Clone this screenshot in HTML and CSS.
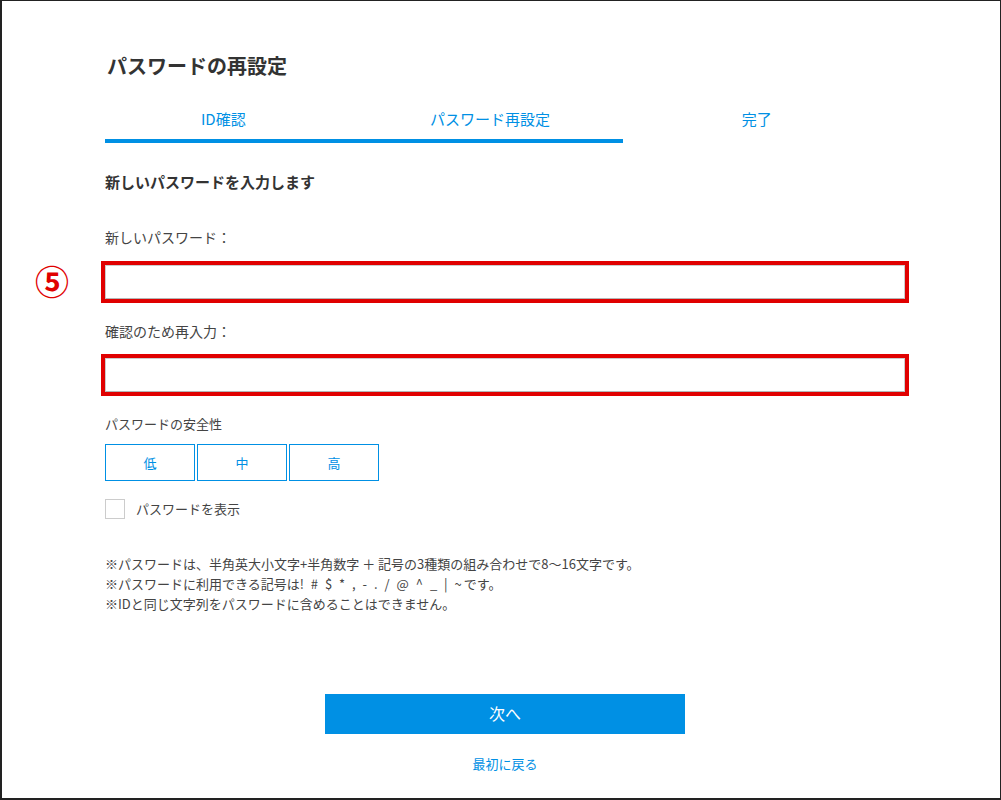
FILE: index.html
```html
<!DOCTYPE html>
<html lang="ja">
  <head>
    <meta charset="utf-8" />
    <meta name="viewport" content="width=device-width, initial-scale=1" />
    <title>パスワードの再設定</title>
    <link rel="stylesheet" href="styles.css">
  </head>
  <body>
    <div class="frame">
      <div class="page">
        <h1 class="title">パスワードの再設定</h1>

        <div class="steps">
          <div class="step">ID確認</div>
          <div class="step">パスワード再設定</div>
          <div class="step">完了</div>
        </div>
        <div class="progress"></div>

        <p class="lead">新しいパスワードを入力します</p>

        <label class="label label-first" for="pw">新しいパスワード：</label>
        <div class="mark">
          <span class="mark-num">⑤</span>
          <input class="field" id="pw" type="password" />
        </div>

        <label class="label" for="pw2">確認のため再入力：</label>
        <div class="mark mark-second">
          <input class="field" id="pw2" type="password" />
        </div>

        <p class="strength-label">パスワードの安全性</p>
        <div class="strength">
          <div class="strength-box">低</div>
          <div class="strength-box">中</div>
          <div class="strength-box">高</div>
        </div>

        <label class="show">
          <span class="check"></span>
          <span>パスワードを表示</span>
        </label>

        <div class="notes">
          <p>※パスワードは、半角英大小文字+半角数字 ＋ 記号の3種類の組み合わせで8～16文字です。</p>
          <p>※パスワードに利用できる記号は<span class="symbols">! # $ * , - . / @ ^ _ | ~</span>です。</p>
          <p>※IDと同じ文字列をパスワードに含めることはできません。</p>
        </div>

        <div class="actions">
          <button class="next" type="button">次へ</button>
          <a class="back" href="#">最初に戻る</a>
        </div>
      </div>
    </div>
  </body>
</html>
```

FILE: styles.css
```css
:root {
  --blue: #0090e4;
  --text: #333333;
  --mark: #e00000;
}

* {
  box-sizing: border-box;
}

body {
  margin: 0;
  font-family: "Noto Sans CJK JP", "Noto Sans", sans-serif;
  color: var(--text);
  background: #ffffff;
}

.frame {
  width: 1001px;
  height: 800px;
  border: 2px solid #222222;
  border-top-width: 1px;
  border-right-width: 1px;
  overflow: hidden;
}

.page {
  width: 800px;
  margin-left: 103px;
}

.title {
  margin: 50px 0 0 2px;
  font-size: 20px;
  line-height: 30px;
  font-weight: bold;
}

.steps {
  display: flex;
  margin-top: 23px;
}

.step {
  flex: 1;
  padding-right: 30px;
  text-align: center;
  font-size: 15px;
  line-height: 30px;
  color: var(--blue);
}

.progress {
  width: 518px;
  height: 4px;
  margin-top: 5px;
  background: var(--blue);
}

.lead {
  margin: 29px 0 0;
  font-size: 15px;
  line-height: 20px;
  font-weight: bold;
}

.label {
  display: block;
  margin-top: 18px;
  font-size: 14px;
  line-height: 20px;
  color: #444444;
}

.label-first {
  margin-top: 35px;
}

.mark {
  position: relative;
  height: 42px;
  margin: 14px -4px 0;
  border: 4px solid var(--mark);
}

.mark-second {
  margin-top: 13px;
}

.mark-num {
  position: absolute;
  left: -70px;
  top: -4px;
  font-size: 34px;
  line-height: 40px;
  font-weight: bold;
  color: var(--mark);
}

.field {
  display: block;
  width: 100%;
  height: 34px;
  margin: 0;
  padding: 0 8px;
  border: 1px solid #cccccc;
  border-bottom-color: #b5b5b5;
  outline: none;
  font-size: 14px;
}

.strength-label {
  margin: 18px 0 0;
  font-size: 13px;
  line-height: 20px;
  color: #444444;
}

.strength {
  display: flex;
  gap: 2px;
  margin-top: 10px;
}

.strength-box {
  width: 90px;
  height: 37px;
  border: 1px solid var(--blue);
  font-size: 13px;
  line-height: 35px;
  text-align: center;
  color: var(--blue);
}

.show {
  display: flex;
  align-items: center;
  gap: 11px;
  margin-top: 18px;
  font-size: 13px;
  line-height: 20px;
  color: #444444;
}

.check {
  width: 20px;
  height: 20px;
  border: 1px solid #cccccc;
}

.notes {
  margin-top: 35px;
}

.notes p {
  margin: 0;
  font-size: 13px;
  line-height: 20px;
  color: #444444;
}

.symbols {
  letter-spacing: 2px;
}

.actions {
  display: flex;
  flex-direction: column;
  align-items: center;
  margin-top: 80px;
}

.next {
  width: 360px;
  height: 40px;
  padding: 0 0 3px;
  border: none;
  background: var(--blue);
  color: #ffffff;
  font-family: inherit;
  font-size: 16px;
}

.back {
  margin-top: 20px;
  font-size: 13px;
  line-height: 20px;
  color: var(--blue);
  text-decoration: none;
}
```
